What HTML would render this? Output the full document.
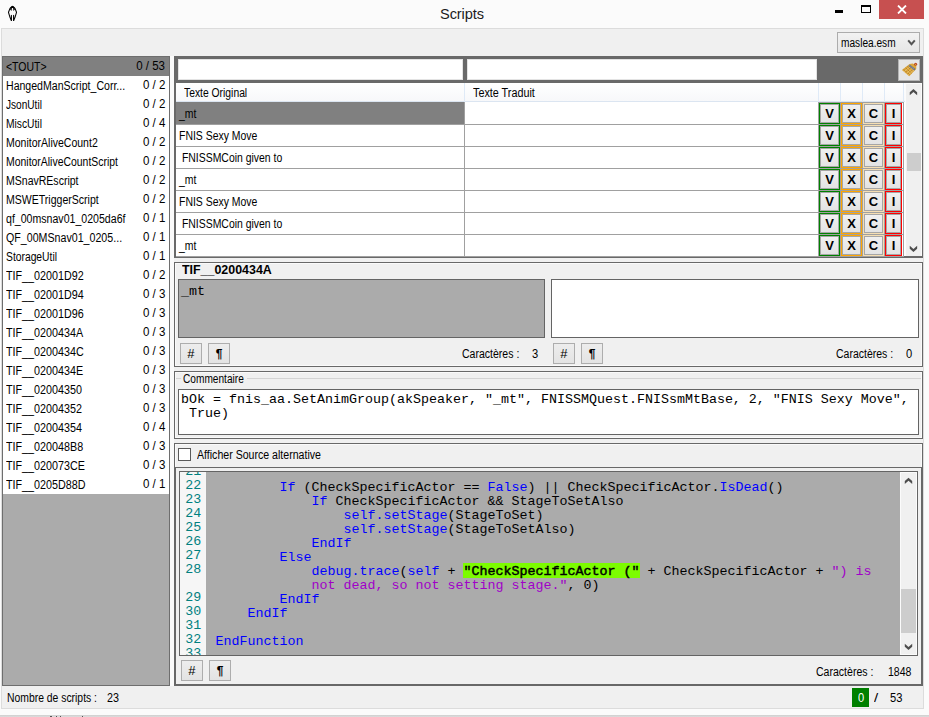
<!DOCTYPE html>
<html lang="fr"><head><meta charset="utf-8"><title>Scripts</title>
<style>
*{box-sizing:border-box;margin:0;padding:0}
html,body{width:929px;height:717px;overflow:hidden;background:#fbfbfb}
body{position:relative;font-family:"Liberation Sans", sans-serif;font-size:11px;color:#000;line-height:13px}
.a{position:absolute}
.t{position:absolute;white-space:pre;font-size:12px;height:13px;line-height:13px;transform-origin:0 0}
.r{text-align:right}
.m{position:absolute;white-space:pre;font-family:"Liberation Mono", monospace;font-size:13.33px;line-height:14px;height:14px}
.ln{position:absolute;white-space:pre;font-family:"Liberation Mono", monospace;font-size:13.33px;line-height:14px;height:14px;color:#008080;left:5.2px}
.btn{position:absolute;width:22px;height:21px;border:1px solid #adadad;background:linear-gradient(#ededed,#e3e3e3);text-align:center;font-family:"Liberation Mono", monospace;font-size:13px;line-height:21px}
.btn b{font-family:"Liberation Sans", sans-serif;font-size:12px}
.kw{color:#0000ff}
.st{color:#a000c8}
.hl{-webkit-text-stroke:0.45px #000}
.gb{position:absolute;width:21px;height:21px;border:1px solid;background:#f4f4f4}
.gb i{position:absolute;left:0;top:0;right:0;bottom:0;border:1px solid #a6a6a6;background:linear-gradient(#f0f0f0,#e3e3e3);font-style:normal;font-weight:bold;font-size:13px;line-height:17px;text-align:center;display:block}
</style></head><body>
<div class="a" style="left:0;top:0;width:929px;height:717px;background:#fbfbfb"></div>
<span class="a" style="left:440px;top:4px;font-size:14.6px;line-height:20px;letter-spacing:-0.1px;white-space:pre;color:#1c1c1c">Scripts</span>
<svg class="a" style="left:0;top:0" width="26" height="26" viewBox="0 0 26 26"><path d="M12.5 6.2 L10 8.4 L8.5 12.3 L9.6 16.2 L11.4 20.8 M12.5 6.2 L15 8.4 L16.5 12.3 L15.4 16.2 L13.6 20.8" fill="none" stroke="#000" stroke-width="1.05" stroke-linejoin="round"/><path d="M10.7 6.9 C11.4 5.9 13.6 5.9 14.3 6.9 L14.9 9.6 L13.5 10.9 L13.1 8.1 L11.9 8.1 L11.5 10.9 L10.1 9.6 Z" fill="#000"/><path d="M10.8 15.2 L11.9 14.8 L12 20.9 L11.2 20.9 C10.7 19 10.7 17 10.8 15.2 Z M14.2 15.2 L13.1 14.8 L13 20.9 L13.8 20.9 C14.3 19 14.3 17 14.2 15.2 Z" fill="#000"/></svg>
<div class="a" style="left:835px;top:10.4px;width:8px;height:2.6px;background:#000"></div>
<div class="a" style="left:861px;top:5px;width:10px;height:8px;border:1px solid #000;border-top-width:2px"></div>
<div class="a" style="left:879px;top:0;width:45px;height:19px;background:#c75050"></div>
<svg class="a" style="left:897px;top:5px" width="10" height="9" viewBox="0 0 10 9"><path d="M1 0.5 L9 8.5 M9 0.5 L1 8.5" stroke="#fff" stroke-width="1.8" fill="none"/></svg>
<div class="a" style="left:1px;top:28px;width:923px;height:681px;background:#f0f0f0;border:1px solid #dcdcdc"></div>
<div class="a" style="left:0;top:714.6px;width:929px;height:3px;background:linear-gradient(#cfcfcf,#e4e4e4)"></div>
<div class="a" style="left:50px;top:716px;width:1.5px;height:1px;background:#555"></div>
<div class="a" style="left:55.5px;top:716px;width:1.5px;height:1px;background:#555"></div>
<div class="a" style="left:59.5px;top:716px;width:1.5px;height:1px;background:#555"></div>
<div class="a" style="left:81.5px;top:716px;width:1.5px;height:1px;background:#555"></div>
<div class="a" style="left:837px;top:32px;width:83px;height:21px;border:1px solid #acacac;background:linear-gradient(#f2f2f2,#e6e6e6)"></div>
<span class="t " style="left:840.7px;top:37px;transform:scaleX(0.844);">maslea.esm</span>
<svg class="a" style="left:907px;top:39px" width="9" height="8" viewBox="0 0 9 8"><path d="M1.2 1.4 L4.5 5.2 L7.8 1.4" stroke="#555" stroke-width="2" fill="none"/></svg>
<div class="a" style="left:2px;top:56px;width:168px;height:630px;background:#ababab;border:1px solid #6e6e6e"></div>
<div class="a" style="left:3px;top:57px;width:166px;height:437px;background:#fff"></div>
<div class="a" style="left:3px;top:57px;width:166px;height:19px;background:#808080"></div>
<span class="t " style="left:6.3px;top:61px;transform:scaleX(0.874);">&lt;TOUT&gt;</span>
<span class="t " style="right:763.8px;top:60px;transform-origin:100% 0;transform:scaleX(0.960);">0 / 53</span>
<span class="t " style="left:6.3px;top:80px;transform:scaleX(0.880);">HangedManScript_Corr...</span>
<span class="t " style="right:763.8px;top:79px;transform-origin:100% 0;transform:scaleX(0.960);">0 / 2</span>
<span class="t " style="left:6.3px;top:99px;transform:scaleX(0.841);">JsonUtil</span>
<span class="t " style="right:763.8px;top:98px;transform-origin:100% 0;transform:scaleX(0.960);">0 / 2</span>
<span class="t " style="left:6.3px;top:118px;transform:scaleX(0.855);">MiscUtil</span>
<span class="t " style="right:763.8px;top:117px;transform-origin:100% 0;transform:scaleX(0.960);">0 / 4</span>
<span class="t " style="left:6.3px;top:137px;transform:scaleX(0.876);">MonitorAliveCount2</span>
<span class="t " style="right:763.8px;top:136px;transform-origin:100% 0;transform:scaleX(0.960);">0 / 2</span>
<span class="t " style="left:6.3px;top:156px;transform:scaleX(0.870);">MonitorAliveCountScript</span>
<span class="t " style="right:763.8px;top:155px;transform-origin:100% 0;transform:scaleX(0.960);">0 / 2</span>
<span class="t " style="left:6.3px;top:175px;transform:scaleX(0.877);">MSnavREscript</span>
<span class="t " style="right:763.8px;top:174px;transform-origin:100% 0;transform:scaleX(0.960);">0 / 2</span>
<span class="t " style="left:6.3px;top:194px;transform:scaleX(0.878);">MSWETriggerScript</span>
<span class="t " style="right:763.8px;top:193px;transform-origin:100% 0;transform:scaleX(0.960);">0 / 2</span>
<span class="t " style="left:6.3px;top:213px;transform:scaleX(0.882);">qf_00msnav01_0205da6f</span>
<span class="t " style="right:763.8px;top:212px;transform-origin:100% 0;transform:scaleX(0.960);">0 / 1</span>
<span class="t " style="left:6.3px;top:232px;transform:scaleX(0.888);">QF_00MSnav01_0205...</span>
<span class="t " style="right:763.8px;top:231px;transform-origin:100% 0;transform:scaleX(0.960);">0 / 1</span>
<span class="t " style="left:6.3px;top:251px;transform:scaleX(0.859);">StorageUtil</span>
<span class="t " style="right:763.8px;top:250px;transform-origin:100% 0;transform:scaleX(0.960);">0 / 1</span>
<span class="t " style="left:6.3px;top:270px;transform:scaleX(0.896);">TIF__02001D92</span>
<span class="t " style="right:763.8px;top:269px;transform-origin:100% 0;transform:scaleX(0.960);">0 / 2</span>
<span class="t " style="left:6.3px;top:289px;transform:scaleX(0.896);">TIF__02001D94</span>
<span class="t " style="right:763.8px;top:288px;transform-origin:100% 0;transform:scaleX(0.960);">0 / 3</span>
<span class="t " style="left:6.3px;top:308px;transform:scaleX(0.896);">TIF__02001D96</span>
<span class="t " style="right:763.8px;top:307px;transform-origin:100% 0;transform:scaleX(0.960);">0 / 3</span>
<span class="t " style="left:6.3px;top:327px;transform:scaleX(0.896);">TIF__0200434A</span>
<span class="t " style="right:763.8px;top:326px;transform-origin:100% 0;transform:scaleX(0.960);">0 / 3</span>
<span class="t " style="left:6.3px;top:346px;transform:scaleX(0.896);">TIF__0200434C</span>
<span class="t " style="right:763.8px;top:345px;transform-origin:100% 0;transform:scaleX(0.960);">0 / 3</span>
<span class="t " style="left:6.3px;top:365px;transform:scaleX(0.896);">TIF__0200434E</span>
<span class="t " style="right:763.8px;top:364px;transform-origin:100% 0;transform:scaleX(0.960);">0 / 3</span>
<span class="t " style="left:6.3px;top:384px;transform:scaleX(0.896);">TIF__02004350</span>
<span class="t " style="right:763.8px;top:383px;transform-origin:100% 0;transform:scaleX(0.960);">0 / 3</span>
<span class="t " style="left:6.3px;top:403px;transform:scaleX(0.896);">TIF__02004352</span>
<span class="t " style="right:763.8px;top:402px;transform-origin:100% 0;transform:scaleX(0.960);">0 / 3</span>
<span class="t " style="left:6.3px;top:422px;transform:scaleX(0.896);">TIF__02004354</span>
<span class="t " style="right:763.8px;top:421px;transform-origin:100% 0;transform:scaleX(0.960);">0 / 4</span>
<span class="t " style="left:6.3px;top:441px;transform:scaleX(0.896);">TIF__020048B8</span>
<span class="t " style="right:763.8px;top:440px;transform-origin:100% 0;transform:scaleX(0.960);">0 / 3</span>
<span class="t " style="left:6.3px;top:460px;transform:scaleX(0.896);">TIF__020073CE</span>
<span class="t " style="right:763.8px;top:459px;transform-origin:100% 0;transform:scaleX(0.960);">0 / 3</span>
<span class="t " style="left:6.3px;top:479px;transform:scaleX(0.896);">TIF__0205D88D</span>
<span class="t " style="right:763.8px;top:478px;transform-origin:100% 0;transform:scaleX(0.960);">0 / 1</span>
<div class="a" style="left:170px;top:56px;width:4px;height:630px;background:#fafafa"></div>
<span class="t " style="left:7.3px;top:692px;transform:scaleX(0.865);">Nombre de scripts :</span>
<span class="t " style="left:107px;top:692px;transform:scaleX(0.899);">23</span>
<div class="a" style="left:852px;top:688px;width:17px;height:19px;background:#008000"></div>
<span class="t " style="left:857.5px;top:692px;transform:scaleX(0.930);color:#fff">0</span>
<span class="t " style="left:873.8px;top:692px;transform:scaleX(1.250);">/</span>
<span class="t " style="left:889.8px;top:692px;transform:scaleX(0.929);">53</span>
<div class="a" style="left:174px;top:56px;width:749px;height:202px;background:#fff;border:2px solid #696969;border-top:0"></div>
<div class="a" style="left:174px;top:56px;width:749px;height:27px;background:#696969"></div>
<div class="a" style="left:178px;top:59px;width:285px;height:21px;background:#fff;border:1px solid #e3e3e3"></div>
<div class="a" style="left:467px;top:59px;width:350px;height:21px;background:#fff;border:1px solid #e3e3e3"></div>
<div class="a" style="left:898px;top:59px;width:22px;height:22px;background:#e6e6e6;border:1px solid #b5b5b5"></div>
<svg class="a" style="left:894px;top:56px" width="30" height="28" viewBox="0 0 30 28"><polygon points="15.6,8 18.6,7.4 21.2,8.6 22.3,10.6 22.2,13 15.2,20.2 7.9,14" fill="#dba63c"/><path d="M9.6 13.4 L16 19 M11.6 11.9 L17.6 17.2 M13.4 10.5 L19 15.4" stroke="#b07a24" stroke-width="0.9" fill="none"/><path d="M10.2 15.6 L16.6 10.4 M12.4 17.4 L18.6 12 M14.2 19 L20.4 13.4" stroke="#f2cf78" stroke-width="0.7" fill="none"/><path d="M15.1 9.2 L21 13.8" stroke="#687084" stroke-width="1.9" fill="none"/><path d="M15.6 9.6 L20.6 13.4" stroke="#c9d0dc" stroke-width="0.5" stroke-dasharray="0.8 0.8" fill="none"/><circle cx="21.6" cy="8.3" r="1.5" fill="#b8431f"/><circle cx="21.6" cy="8.3" r="0.6" fill="#e6b040"/></svg>
<div class="a" style="left:176px;top:83px;width:729px;height:19px;background:linear-gradient(#fff,#f7f8fa);border-bottom:1px solid #dbe5f1"></div>
<div class="a" style="left:464px;top:83px;width:1px;height:19px;background:#dfeaf7"></div>
<div class="a" style="left:818px;top:83px;width:1px;height:19px;background:#dfeaf7"></div>
<div class="a" style="left:840px;top:83px;width:1px;height:19px;background:#dfeaf7"></div>
<div class="a" style="left:862px;top:83px;width:1px;height:19px;background:#dfeaf7"></div>
<div class="a" style="left:884px;top:83px;width:1px;height:19px;background:#dfeaf7"></div>
<div class="a" style="left:903px;top:83px;width:1px;height:19px;background:#dfeaf7"></div>
<span class="t " style="left:183.8px;top:87px;transform:scaleX(0.861);">Texte Original</span>
<span class="t " style="left:472.6px;top:87px;transform:scaleX(0.900);">Texte Traduit</span>
<div class="a" style="left:176px;top:102px;width:288px;height:22px;background:#808080"></div>
<div class="a" style="left:176px;top:124px;width:728px;height:1px;background:#a0a0a0"></div>
<span class="t " style="left:179.3px;top:108px;transform:scaleX(0.870);">_mt</span>
<div class="gb" style="left:819px;top:103px;width:21px;border-color:#008000"><i>V</i></div>
<div class="gb" style="left:841px;top:103px;width:21px;border-color:#ffa500"><i>X</i></div>
<div class="gb" style="left:863px;top:103px;width:21px;border-color:#f5deb3"><i>C</i></div>
<div class="gb" style="left:885px;top:103px;width:17px;border-color:#ff0000"><i>I</i></div>
<div class="a" style="left:176px;top:146px;width:728px;height:1px;background:#a0a0a0"></div>
<span class="t " style="left:179.3px;top:130px;transform:scaleX(0.870);">FNIS Sexy Move</span>
<div class="gb" style="left:819px;top:125px;width:21px;border-color:#008000"><i>V</i></div>
<div class="gb" style="left:841px;top:125px;width:21px;border-color:#ffa500"><i>X</i></div>
<div class="gb" style="left:863px;top:125px;width:21px;border-color:#f5deb3"><i>C</i></div>
<div class="gb" style="left:885px;top:125px;width:17px;border-color:#ff0000"><i>I</i></div>
<div class="a" style="left:176px;top:168px;width:728px;height:1px;background:#a0a0a0"></div>
<span class="t " style="left:179.3px;top:152px;transform:scaleX(0.870);"> FNISSMCoin given to</span>
<div class="gb" style="left:819px;top:147px;width:21px;border-color:#008000"><i>V</i></div>
<div class="gb" style="left:841px;top:147px;width:21px;border-color:#ffa500"><i>X</i></div>
<div class="gb" style="left:863px;top:147px;width:21px;border-color:#f5deb3"><i>C</i></div>
<div class="gb" style="left:885px;top:147px;width:17px;border-color:#ff0000"><i>I</i></div>
<div class="a" style="left:176px;top:190px;width:728px;height:1px;background:#a0a0a0"></div>
<span class="t " style="left:179.3px;top:174px;transform:scaleX(0.870);">_mt</span>
<div class="gb" style="left:819px;top:169px;width:21px;border-color:#008000"><i>V</i></div>
<div class="gb" style="left:841px;top:169px;width:21px;border-color:#ffa500"><i>X</i></div>
<div class="gb" style="left:863px;top:169px;width:21px;border-color:#f5deb3"><i>C</i></div>
<div class="gb" style="left:885px;top:169px;width:17px;border-color:#ff0000"><i>I</i></div>
<div class="a" style="left:176px;top:212px;width:728px;height:1px;background:#a0a0a0"></div>
<span class="t " style="left:179.3px;top:196px;transform:scaleX(0.870);">FNIS Sexy Move</span>
<div class="gb" style="left:819px;top:191px;width:21px;border-color:#008000"><i>V</i></div>
<div class="gb" style="left:841px;top:191px;width:21px;border-color:#ffa500"><i>X</i></div>
<div class="gb" style="left:863px;top:191px;width:21px;border-color:#f5deb3"><i>C</i></div>
<div class="gb" style="left:885px;top:191px;width:17px;border-color:#ff0000"><i>I</i></div>
<div class="a" style="left:176px;top:234px;width:728px;height:1px;background:#a0a0a0"></div>
<span class="t " style="left:179.3px;top:218px;transform:scaleX(0.870);"> FNISSMCoin given to</span>
<div class="gb" style="left:819px;top:213px;width:21px;border-color:#008000"><i>V</i></div>
<div class="gb" style="left:841px;top:213px;width:21px;border-color:#ffa500"><i>X</i></div>
<div class="gb" style="left:863px;top:213px;width:21px;border-color:#f5deb3"><i>C</i></div>
<div class="gb" style="left:885px;top:213px;width:17px;border-color:#ff0000"><i>I</i></div>
<div class="a" style="left:176px;top:256px;width:728px;height:1px;background:#a0a0a0"></div>
<span class="t " style="left:179.3px;top:240px;transform:scaleX(0.870);">_mt</span>
<div class="gb" style="left:819px;top:235px;width:21px;border-color:#008000"><i>V</i></div>
<div class="gb" style="left:841px;top:235px;width:21px;border-color:#ffa500"><i>X</i></div>
<div class="gb" style="left:863px;top:235px;width:21px;border-color:#f5deb3"><i>C</i></div>
<div class="gb" style="left:885px;top:235px;width:17px;border-color:#ff0000"><i>I</i></div>
<div class="a" style="left:464px;top:102px;width:1px;height:155px;background:#a0a0a0"></div>
<div class="a" style="left:903px;top:102px;width:1px;height:155px;background:#a0a0a0"></div>
<div class="a" style="left:818px;top:102px;width:86px;height:1px;background:#a0a0a0"></div>
<div class="a" style="left:818px;top:102px;width:1px;height:155px;background:#a0a0a0"></div>
<div class="a" style="left:840px;top:102px;width:1px;height:155px;background:#a0a0a0"></div>
<div class="a" style="left:862px;top:102px;width:1px;height:155px;background:#a0a0a0"></div>
<div class="a" style="left:884px;top:102px;width:1px;height:155px;background:#a0a0a0"></div>
<div class="a" style="left:905px;top:83px;width:17px;height:173px;background:#f0f0f0;border:1px solid #fbfbfb;border-bottom:0"></div>
<div class="a" style="left:906.5px;top:153px;width:14.5px;height:18px;background:#cdcdcd"></div>
<svg class="a" style="left:907px;top:86px" width="12" height="11" viewBox="0 0 12 11"><polygon points="6.45,2.90 10.15,6.20 10.15,9.20 6.45,5.90 2.75,9.20 2.75,6.20" fill="#4d4d4d"/></svg>
<svg class="a" style="left:907px;top:243px" width="12" height="11" viewBox="0 0 12 11"><polygon points="6.45,9.00 10.15,5.70 10.15,2.70 6.45,6.00 2.75,2.70 2.75,5.70" fill="#4d4d4d"/></svg>
<div class="a" style="left:174px;top:262px;width:749px;height:105px;background:#f0f0f0;border:1px solid #686868;box-shadow:inset 0 0 0 1px #fafafa"></div>
<span class="a" style="left:182px;top:263px;font-weight:bold;font-size:12px;line-height:14px;white-space:pre;transform-origin:0 0;transform:scaleX(1.035)">TIF__0200434A</span>
<div class="a" style="left:178px;top:279px;width:367px;height:59px;background:#ababab;border:1px solid #646464"></div>
<span class="m" style="left:181px;top:285px">_mt</span>
<div class="a" style="left:551px;top:279px;width:368px;height:59px;background:#fff;border:1px solid #646464"></div>
<div class="btn" style="left:180px;top:343px">#</div><div class="btn" style="left:208px;top:343px"><b>¶</b></div>
<div class="btn" style="left:553px;top:343px">#</div><div class="btn" style="left:581px;top:343px"><b>¶</b></div>
<span class="t " style="left:461.5px;top:348px;transform:scaleX(0.877);">Caractères :</span>
<span class="t " style="left:532.2px;top:348px;transform:scaleX(0.930);">3</span>
<span class="t " style="left:835.5px;top:348px;transform:scaleX(0.874);">Caractères :</span>
<span class="t " style="left:906.2px;top:348px;transform:scaleX(0.930);">0</span>
<div class="a" style="left:174px;top:371px;width:749px;height:68px;background:#f0f0f0;border:1px solid #686868;box-shadow:inset 0 0 0 1px #fafafa"></div>
<div class="a" style="left:176px;top:378px;width:745px;height:1px;background:#d4d4d4"></div>
<div class="a" style="left:181px;top:373px;width:66px;height:12px;background:#f0f0f0"></div>
<span class="t " style="left:183.4px;top:373px;transform:scaleX(0.844);">Commentaire</span>
<div class="a" style="left:178px;top:389px;width:741px;height:46px;background:#fff;border:1px solid #646464"></div>
<span class="m" style="left:181px;top:393px">bOk = fnis_aa.SetAnimGroup(akSpeaker, &quot;_mt&quot;, FNISSMQuest.FNISsmMtBase, 2, &quot;FNIS Sexy Move&quot;,</span>
<span class="m" style="left:181px;top:407px"> True)</span>
<div class="a" style="left:174px;top:443px;width:749px;height:243px;background:#f0f0f0;border:1px solid #686868;box-shadow:inset 0 0 0 1px #fafafa"></div>
<div class="a" style="left:175px;top:467px;width:747px;height:218px;border:1px solid #686868"></div>
<div class="a" style="left:178px;top:448px;width:13px;height:13px;background:#fff;border:1px solid #5a5a5a"></div>
<span class="t " style="left:197.3px;top:449px;transform:scaleX(0.882);">Afficher Source alternative</span>
<div class="a" id="code" style="left:179px;top:471px;width:739px;height:185px;background:#ababab;border:1px solid #646464;overflow:hidden">
<div class="a" style="left:0;top:0;width:26px;height:183px;background:#f6f6f6"></div>
<div class="a" style="left:283px;top:91px;width:177px;height:15px;background:#7cfc00"></div>
<span class="ln" style="top:-7px">21</span>
<span class="ln" style="top:7px">22</span>
<span class="m" style="left:99.5px;top:9px"><span class="kw">If</span> (CheckSpecificActor == <span class="kw">False</span>) || CheckSpecificActor.<span class="kw">IsDead</span>()</span>
<span class="ln" style="top:21px">23</span>
<span class="m" style="left:131.5px;top:23px"><span class="kw">If</span> CheckSpecificActor &amp;&amp; StageToSetAlso</span>
<span class="ln" style="top:35px">24</span>
<span class="m" style="left:163.5px;top:37px"><span class="kw">self.setStage</span>(StageToSet)</span>
<span class="ln" style="top:49px">25</span>
<span class="m" style="left:163.5px;top:51px"><span class="kw">self.setStage</span>(StageToSetAlso)</span>
<span class="ln" style="top:63px">26</span>
<span class="m" style="left:131.5px;top:65px"><span class="kw">EndIf</span></span>
<span class="ln" style="top:77px">27</span>
<span class="m" style="left:99.5px;top:79px"><span class="kw">Else</span></span>
<span class="ln" style="top:91px">28</span>
<span class="m" style="left:131.5px;top:93px"><span class="kw">debug.trace</span>(<span class="kw">self</span> + <span class="hl">&quot;CheckSpecificActor (&quot;</span> + CheckSpecificActor + <span class="st">&quot;) is</span></span>
<span class="m" style="left:131.5px;top:107px"><span class="st">not dead, so not setting stage.&quot;</span>, 0)</span>
<span class="ln" style="top:119px">29</span>
<span class="m" style="left:99.5px;top:121px"><span class="kw">EndIf</span></span>
<span class="ln" style="top:133px">30</span>
<span class="m" style="left:67.5px;top:135px"><span class="kw">EndIf</span></span>
<span class="ln" style="top:147px">31</span>
<span class="ln" style="top:161px">32</span>
<span class="m" style="left:35.5px;top:163px"><span class="kw">EndFunction</span></span>
<span class="ln" style="top:175px">33</span>
<div class="a" style="left:720px;top:0;width:17px;height:183px;background:#f0f0f0;border:1px solid #fbfbfb"></div>
<div class="a" style="left:721px;top:117px;width:15px;height:44px;background:#cdcdcd"></div>
<svg class="a" style="left:722px;top:3px" width="12" height="11" viewBox="0 0 12 11"><polygon points="6.50,2.80 10.20,6.10 10.20,9.10 6.50,5.80 2.80,9.10 2.80,6.10" fill="#4d4d4d"/></svg>
<svg class="a" style="left:722px;top:169px" width="12" height="11" viewBox="0 0 12 11"><polygon points="6.50,9.10 10.20,5.80 10.20,2.80 6.50,6.10 2.80,2.80 2.80,5.80" fill="#4d4d4d"/></svg>
</div>
<div class="btn" style="left:181px;top:660px">#</div><div class="btn" style="left:209px;top:660px"><b>¶</b></div>
<span class="t " style="left:816.4px;top:666px;transform:scaleX(0.878);">Caractères :</span>
<span class="t " style="left:887.6px;top:666px;transform:scaleX(0.877);">1848</span>
</body></html>
